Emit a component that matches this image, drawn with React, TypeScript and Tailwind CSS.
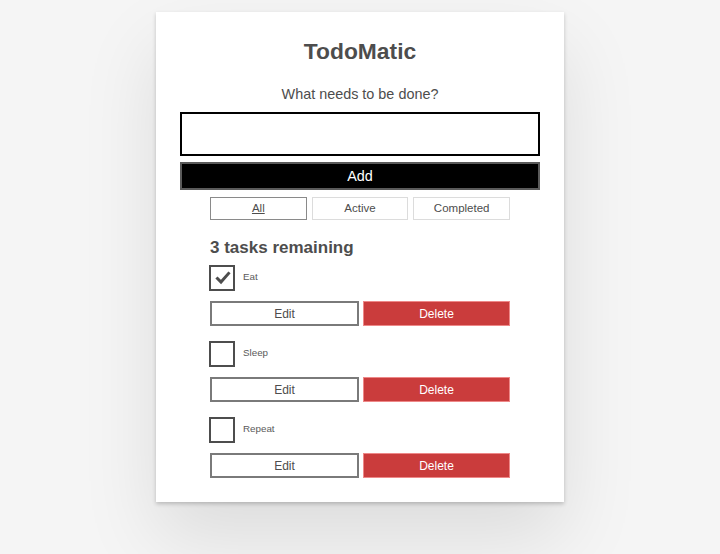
const tasks = [
  { id: 'todo-0', name: 'Eat', completed: true },
  { id: 'todo-1', name: 'Sleep', completed: false },
  { id: 'todo-2', name: 'Repeat', completed: false },
]

const filters = ['All', 'Active', 'Completed']

function Checkbox({ checked }: { checked: boolean }) {
  return (
    <div className="-ml-px h-[26px] w-[26px] shrink-0 border-2 border-[#4d4d4d] bg-white">
      {checked && (
        <svg viewBox="0 0 26 26" className="-m-[2px] block" style={{ width: 26, height: 26 }}>
          <path d="M8.5 13.5 L12 17 L19.5 8.5" fill="none" stroke="#4d4d4d" strokeWidth="3" strokeLinecap="square" />
        </svg>
      )}
    </div>
  )
}

export default function App() {
  return (
    <div className="min-h-[554px] w-full bg-[#f5f5f5] pt-[12px] font-['Liberation_Sans',Arial,sans-serif] text-[#4d4d4d]">
      <div className="mx-auto flex w-[408px] flex-col bg-white px-6 pt-[26px] pb-6 shadow-[0_2px_4px_0_rgba(0,0,0,0.2),0_36px_72px_0_rgba(0,0,0,0.1)]">
        <h1 className="text-center text-[22.8px] font-bold leading-[26px]">TodoMatic</h1>

        <form className="mt-[20px] flex flex-col" onSubmit={e => e.preventDefault()}>
          <label className="text-center text-[14.4px] leading-[20px]">What needs to be done?</label>
          <input className="mt-[8px] h-[44px] w-full border-2 border-[#000] bg-white px-2 outline-none" />
          <button className="mt-[6px] h-[28px] w-full border-2 border-[#5a5a5a] bg-black text-[14.4px] leading-none text-white">
            Add
          </button>
        </form>

        <div className="mx-auto flex w-[300px] flex-col">
          <div className="mt-[7px] flex gap-[5px]">
            {filters.map(f => (
              <button
                key={f}
                className={`h-[23px] flex-1 border bg-white text-[11.5px] leading-none text-[#4d4d4d] ${f === 'All' ? 'border-[#8a8a8a] underline' : 'border-[#dcdcdc]'}`}
              >
                {f}
              </button>
            ))}
          </div>

          <h2 className="mt-[17px] text-[17px] font-bold leading-[22px]">3 tasks remaining</h2>

          <ul className="mt-[6px] flex flex-col gap-[15px]">
            {tasks.map(task => (
              <li key={task.id} className="flex flex-col">
                <div className="flex items-start gap-[8px]">
                  <Checkbox checked={task.completed} />
                  <span className="mt-[6px] text-[9.8px] leading-[12px] text-[#5a5a5a]">{task.name}</span>
                </div>
                <div className="mt-[10px] flex gap-[4px]">
                  <button className="h-[25px] flex-1 border-2 border-[#7a7a7a] bg-white text-[12px] leading-none text-[#4d4d4d]">
                    Edit
                  </button>
                  <button className="h-[25px] flex-1 border border-[#e88] bg-[#ca3c3c] text-[12px] leading-none text-white">
                    Delete
                  </button>
                </div>
              </li>
            ))}
          </ul>
        </div>
      </div>
    </div>
  )
}
